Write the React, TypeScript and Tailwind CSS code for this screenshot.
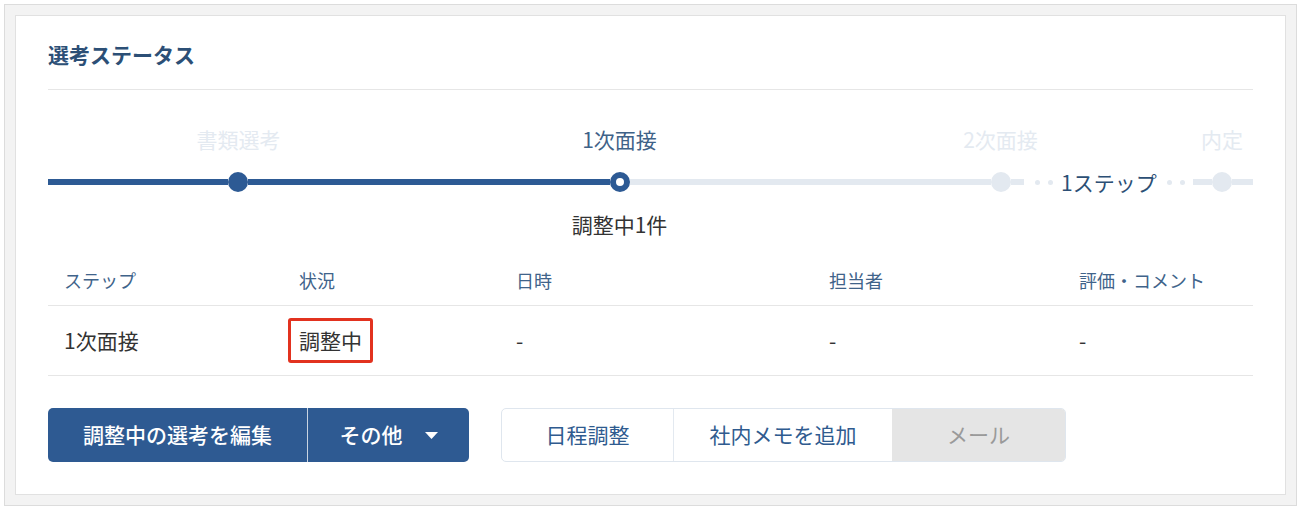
const font = { fontFamily: '"Noto Sans CJK JP", "Noto Sans", sans-serif' };

const columns = [
  { key: "step", label: "ステップ", width: "w-[235px]" },
  { key: "status", label: "状況", width: "w-[217px]" },
  { key: "date", label: "日時", width: "w-[313px]" },
  { key: "owner", label: "担当者", width: "w-[250px]" },
  { key: "comment", label: "評価・コメント", width: "w-[190px]" },
];

const Dot = ({ dark }: { dark?: boolean }) => (
  <div
    className={`h-5 w-5 shrink-0 rounded-full ${dark ? "bg-[#2d5a94]" : "bg-[#e3e9f0]"}`}
  />
);

const Tiny = () => <div className="h-[5px] w-[5px] shrink-0 rounded-full bg-[#e3e9f0]" />;

const Stepper = () => (
  <div className="mt-[34px]">
    <div className="grid grid-cols-[381px_381px_381px_62px] text-center text-[21px] leading-[30px]">
      <div className="text-[#e4eaf1]">書類選考</div>
      <div className="text-[#3f6288]">1次面接</div>
      <div className="text-[#e4eaf1]">2次面接</div>
      <div className="text-[#e4eaf1]">内定</div>
    </div>
    <div className="mt-[18px] flex h-5 items-center">
      <div className="h-[6px] w-[180px] bg-[#2d5a94]" />
      <Dot dark />
      <div className="h-[6px] w-[362px] bg-[#2d5a94]" />
      <div className="h-5 w-5 shrink-0 rounded-full border-[6px] border-[#2d5a94] bg-white" />
      <div className="h-[6px] w-[361px] bg-[#e3e9f0]" />
      <Dot />
      <div className="h-[6px] w-[13px] bg-[#e3e9f0]" />
      <div className="ml-[11px] flex items-center">
        <Tiny />
        <div className="w-2" />
        <Tiny />
        <span className="ml-2 text-[21px] leading-[30px] text-[#2c4f75]">1ステップ</span>
        <div className="w-[10px]" />
        <Tiny />
        <div className="w-2" />
        <Tiny />
      </div>
      <div className="ml-2 h-[6px] flex-1 bg-[#e3e9f0]" />
      <Dot />
      <div className="h-[6px] w-[21px] bg-[#e3e9f0]" />
    </div>
    <div className="mt-[17px] grid grid-cols-[381px_381px_381px_62px] text-center text-[21px] leading-[30px] text-[#333]">
      <div />
      <div>調整中1件</div>
    </div>
  </div>
);

const StatusTable = () => (
  <div className="mt-[17px]">
    <div className="flex h-[50px] items-center border-b border-[#e6e6e6] text-[18px] text-[#40638a]">
      {columns.map((c) => (
        <div key={c.key} className={`${c.width} pl-4`}>
          {c.label}
        </div>
      ))}
    </div>
    <div className="flex h-[70px] items-center border-b border-[#e6e6e6] text-[21px] text-[#333]">
      <div className="w-[235px] pl-4">1次面接</div>
      <div className="w-[217px] pl-4">
        <span className="-ml-[11px] inline-block rounded-[3px] border-[3px] border-[#e2321f] px-2 py-[3px] leading-[33px]">
          調整中
        </span>
      </div>
      <div className="w-[313px] pl-4">-</div>
      <div className="w-[250px] pl-4">-</div>
      <div className="w-[190px] pl-4">-</div>
    </div>
  </div>
);

const Actions = () => (
  <div className="mt-8 flex gap-8 text-[21px]">
    <div className="flex h-[54px] overflow-hidden rounded-[5px] bg-[#2e5a92] font-medium text-white">
      <button className="w-[260px] border-r border-[#c9d4e2]">調整中の選考を編集</button>
      <button className="flex w-[161px] items-center justify-center gap-[22px]">
        <span>その他</span>
        <svg width="13" height="7" viewBox="0 0 13 7">
          <path d="M0 0h13L6.5 7z" fill="#fff" />
        </svg>
      </button>
    </div>
    <div className="flex h-[54px] overflow-hidden rounded-[5px] border border-[#dfe6ee]">
      <button className="w-[172px] border-r border-[#e3e9f0] text-[#2f5b8f]">日程調整</button>
      <button className="w-[218px] text-[#2f5b8f]">社内メモを追加</button>
      <button className="w-[173px] bg-[#e5e5e5] text-[#9a9a9a]">メール</button>
    </div>
  </div>
);

export default function App() {
  return (
    <div className="h-[514px] w-[1304px] bg-white pt-1 pl-1" style={font}>
      <div className="w-[1293px] border border-[#dcdcdc] bg-[#f3f3f3] p-[10px]">
        <div className="border border-[#e1e1e1] bg-white px-8 pt-[23px] pb-8">
          <div className="border-b border-[#e6e6e6] pb-5">
            <h2 className="text-[21px] font-bold leading-[30px] text-[#2c4f76]">選考ステータス</h2>
          </div>
          <Stepper />
          <StatusTable />
          <Actions />
        </div>
      </div>
    </div>
  );
}
